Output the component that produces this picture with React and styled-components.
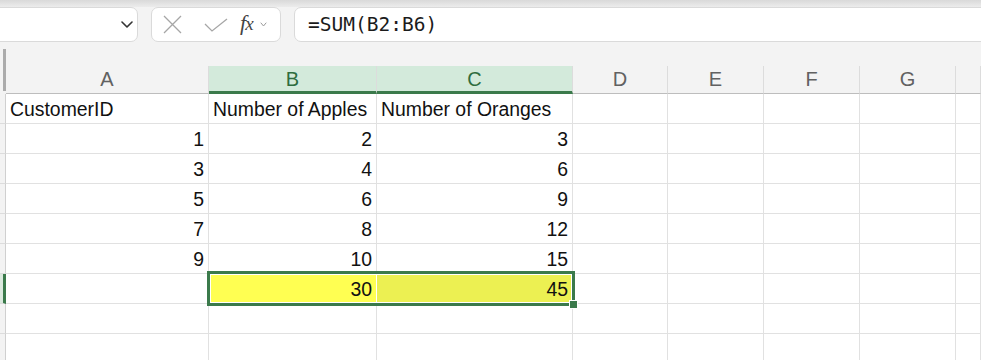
import React from "react";
import styled, { createGlobalStyle } from "styled-components";

const GREEN = "#3b7a4b";

const Global = createGlobalStyle`
  html, body { margin: 0; padding: 0; background: #fff; overflow: hidden; }
  body { font-family: "Liberation Sans", Arial, sans-serif; }
`;

const Page = styled.div`
  width: 981px;
  height: 360px;
  overflow: hidden;
  background: #fff;
`;

const Toolbar = styled.div`
  display: flex;
  align-items: flex-start;
  gap: 13px;
  height: 42px;
  box-sizing: border-box;
  padding-top: 7px;
  background: linear-gradient(#d9d9d9, #ececec 7px, #f3f3f3 7px);
  overflow: hidden;
`;

const Box = styled.div`
  height: 35px;
  box-sizing: border-box;
  background: #fff;
  border: 1px solid #dadada;
  border-radius: 7px;
  display: flex;
  align-items: center;
`;

const NameBox = styled(Box)`
  width: 148px;
  margin-left: -10px;
  justify-content: flex-end;
  padding-right: 4px;
`;

const FxBox = styled(Box)`
  width: 130px;
  padding-left: 11px;
`;

const IconSlot = styled.span`
  display: inline-flex;
  margin-left: ${(p) => p.$ml || 0}px;
`;

const FxLabel = styled.span`
  margin-left: 12px;
  font-family: "Liberation Serif", "Times New Roman", serif;
  font-style: italic;
  font-size: 22px;
  color: #444;
  line-height: 1;
  display: inline-flex;
  align-items: baseline;
  margin-top: -3px;
  & sub {
    font-size: 19px;
    font-family: "Liberation Serif", "Times New Roman", serif;
    vertical-align: -5px;
    margin-left: -1px;
  }
`;

const FormulaBox = styled(Box)`
  flex: 1;
  margin-right: -12px;
  padding-left: 13px;
  font-family: "DejaVu Sans Mono", "Liberation Mono", monospace;
  font-size: 19.5px;
  color: #1b1b1b;
`;

const Sheet = styled.div`
  position: relative;
  display: grid;
  grid-template-columns: 6px 203px 168px 196px 95px 96px 96px 96px 1fr;
  grid-template-rows: 24px 28px repeat(9, 30px);
  font-size: 19.4px;
  color: #111;
`;

const Corner = styled.div`
  grid-column: 1;
  grid-row: 1 / span 2;
  background: #f3f3f3;
  display: flex;
  justify-content: flex-end;
  padding: 7px 0 3px;
`;

const CornerBar = styled.div`
  width: 3px;
  background: #ababab;
`;

const Strip = styled.div`
  grid-column: 2 / -1;
  grid-row: 1;
  background: #f3f3f3;
`;

const ColHeader = styled.div`
  box-sizing: border-box;
  display: flex;
  align-items: center;
  justify-content: center;
  font-size: 20px;
  background: ${(p) => (p.$selected ? "#d3eadb" : "#f3f3f3")};
  color: ${(p) => (p.$selected ? "#2f6d3f" : "#616161")};
  border-right: 1px solid #dcdcdc;
  border-bottom: ${(p) => (p.$selected ? `3px solid ${GREEN}` : "1px solid #bdbdbd")};
  padding-top: ${(p) => (p.$selected ? "2px" : "0")};
`;

const RowHeader = styled.div`
  box-sizing: border-box;
  background: ${(p) => (p.$active ? "#dbe9de" : "#f3f3f3")};
  border-right: ${(p) => (p.$active ? `3px solid ${GREEN}` : "1px solid #d0d0d0")};
  border-bottom: 1px solid #dcdcdc;
`;

const Cell = styled.div`
  box-sizing: border-box;
  display: flex;
  align-items: center;
  justify-content: ${(p) => (p.$num ? "flex-end" : "flex-start")};
  padding: 2px 4px 0;
  white-space: nowrap;
  overflow: hidden;
  background: ${(p) => p.$fill || "#fff"};
  border-right: 1px solid ${(p) => (p.$fill ? "transparent" : "#e1e1e1")};
  border-bottom: 1px solid #e1e1e1;
  background-clip: padding-box;
`;

const Selection = styled.div`
  position: absolute;
  left: 207px;
  top: 229px;
  width: 368px;
  height: 35px;
  box-sizing: border-box;
  border: 3px solid ${GREEN};
  box-shadow: inset 0 0 0 1px #fff;
  pointer-events: none;
`;

const FillHandle = styled.div`
  position: absolute;
  right: -6px;
  bottom: -6px;
  width: 7px;
  height: 7px;
  background: ${GREEN};
  border: 1px solid #fff;
`;

const Chevron = ({ w = 12, h = 7, color = "#333", sw = 1.6 }) => (
  <svg width={w} height={h} viewBox={`0 0 ${w} ${h}`} fill="none">
    <path d={`M1 1 L${w / 2} ${h - 1} L${w - 1} 1`} stroke={color} strokeWidth={sw} strokeLinecap="round" strokeLinejoin="round" />
  </svg>
);

const CrossIcon = () => (
  <svg width="19" height="19" viewBox="0 0 19 19" fill="none">
    <path d="M1 1 L18 18 M18 1 L1 18" stroke="#a6a6a6" strokeWidth="1.3" />
  </svg>
);

const CheckIcon = () => (
  <svg width="24" height="14" viewBox="0 0 24 14" fill="none">
    <path d="M1 6 L8 13 L23 1" stroke="#a6a6a6" strokeWidth="1.3" />
  </svg>
);

const COLS = ["A", "B", "C", "D", "E", "F", "G", ""];
const SELECTED_COLS = ["B", "C"];

const ROWS = [
  ["CustomerID", "Number of Apples", "Number of Oranges"],
  [1, 2, 3],
  [3, 4, 6],
  [5, 6, 9],
  [7, 8, 12],
  [9, 10, 15],
  ["", 30, 45],
  ["", "", ""],
  ["", "", ""],
];

const FILLS = { "6-1": "#ffff52", "6-2": "#ecf052" };

export default function App() {
  return (
    <Page>
      <Global />
      <Toolbar>
        <NameBox>
          <Chevron />
        </NameBox>
        <FxBox>
          <IconSlot>
            <CrossIcon />
          </IconSlot>
          <IconSlot $ml={22}>
            <CheckIcon />
          </IconSlot>
          <FxLabel>
            f<sub>x</sub>
          </FxLabel>
          <IconSlot $ml={6}>
            <Chevron w={7} h={5} color="#9a9a9a" sw={1} />
          </IconSlot>
        </FxBox>
        <FormulaBox>=SUM(B2:B6)</FormulaBox>
      </Toolbar>
      <Sheet>
        <Corner>
          <CornerBar />
        </Corner>
        <Strip />
        {COLS.map((c, i) => (
          <ColHeader key={"h" + i} $selected={SELECTED_COLS.includes(c)}>
            {c}
          </ColHeader>
        ))}
        {ROWS.map((row, r) => (
          <React.Fragment key={"r" + r}>
            <RowHeader $active={r === 6} />
            {COLS.map((_, c) => {
              const v = c < 3 ? row[c] : "";
              return (
                <Cell key={c} $num={typeof v === "number"} $fill={FILLS[`${r}-${c}`]}>
                  {v}
                </Cell>
              );
            })}
          </React.Fragment>
        ))}
        <Selection>
          <FillHandle />
        </Selection>
      </Sheet>
    </Page>
  );
}
